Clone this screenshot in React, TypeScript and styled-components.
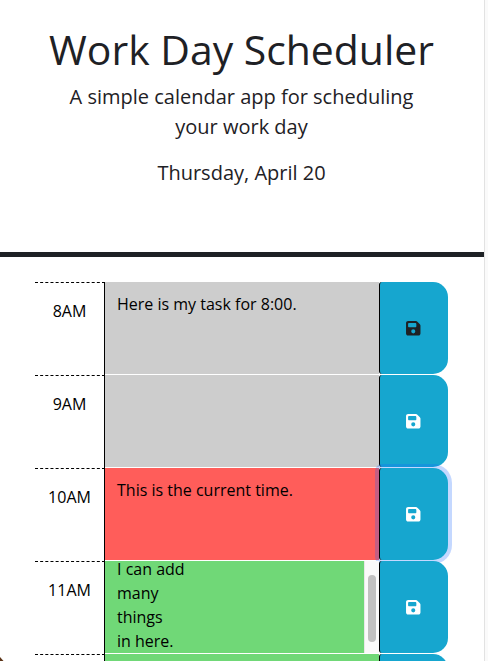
import React from 'react';
import styled, { createGlobalStyle } from 'styled-components';
import { FaFloppyDisk } from 'react-icons/fa6';

const GlobalStyle = createGlobalStyle`
  *, *::before, *::after { box-sizing: border-box; }
  body {
    margin: 0;
    background: #fff;
    color: #1e2125;
    font: 400 16px/1.5 'Open Sans', sans-serif;
    overflow: hidden;
  }
`;

const Page = styled.div`
  display: grid;
  grid-template-columns: minmax(0, 1fr) 4px;
  height: 661px;
  overflow: hidden;
  position: relative;
`;

const Content = styled.div`
  min-width: 0;
  height: 661px;
  overflow: hidden;
`;

const PageGutter = styled.div`
  background: #fafafa;
  border-left: 1px solid #e2e2e2;
`;

const Header = styled.header`
  height: 257px;
  padding: 25px 49px 0 48px;
  text-align: center;
  border-bottom: 5px solid #1e2125;
`;

const Title = styled.h1`
  margin: 0 -20px 9px;
  font-size: 40.9px;
  font-weight: 400;
  line-height: 48px;
  white-space: nowrap;
`;

const Lead = styled.p`
  margin: 0 0 16px;
  font-size: 20px;
  line-height: 30px;
`;

const Schedule = styled.main`
  padding: 25px 36px 0 35px;
`;

const TimeBlock = styled.section`
  display: grid;
  grid-template-columns: 70px 274px 69px;
  height: 93px;
  border-bottom: 1px solid transparent;
`;

const Hour = styled.div`
  height: 93px;
  padding-top: 16px;
  text-align: center;
  color: #000;
  border-right: 1px solid #000;
  border-top: 1px dashed #000;
`;

const fills = { past: '#cdcdcd', present: '#ff5d5a', future: '#70d877' };
type Phase = keyof typeof fills;

const Description = styled.div<{ $phase: Phase }>`
  display: flex;
  height: 92px;
  overflow: hidden;
  color: #000;
  background: ${(p) => fills[p.$phase]};
`;

const TaskText = styled.div<{ $scrolled?: boolean }>`
  flex: 1;
  height: 92px;
  padding: ${(p) => (p.$scrolled ? '0 12px' : '10px 12px')};
  margin-top: ${(p) => (p.$scrolled ? '-4px' : '0')};
  white-space: pre-line;
`;

const ScrollTrack = styled.div`
  width: 15px;
  padding: 14px 3px 0;
  background: #fafafa;
  border-left: 1px solid #e8e8e8;
`;

const ScrollThumb = styled.div`
  width: 8px;
  height: 67px;
  border-radius: 4px;
  background: #c1c1c1;
`;

const SaveButton = styled.button<{ $dark?: boolean; $focused?: boolean }>`
  display: flex;
  align-items: center;
  justify-content: center;
  height: 92px;
  padding: 0 2px 0 0;
  font-size: 16.5px;
  color: ${(p) => (p.$dark ? '#1e2125' : '#fff')};
  background: #16a6cf;
  border: 0;
  border-left: 1px solid #000;
  border-radius: 3px 15px 15px 3px;
  box-shadow: ${(p) => (p.$focused ? '0 0 0 4px rgba(20, 100, 255, 0.25)' : 'none')};
`;

const CornerMark = styled.svg`
  position: absolute;
  left: 0;
  bottom: 0;
`;

interface Slot {
  hour: string;
  phase: Phase;
  text?: string;
  dark?: boolean;
  focused?: boolean;
  scrolled?: boolean;
}

const slots: Slot[] = [
  { hour: '8AM', phase: 'past', text: 'Here is my task for 8:00.', dark: true },
  { hour: '9AM', phase: 'past' },
  { hour: '10AM', phase: 'present', text: 'This is the current time.', focused: true },
  { hour: '11AM', phase: 'future', text: 'I can add\nmany\nthings\nin here.', scrolled: true },
  { hour: '', phase: 'future' },
];

export default function App() {
  return (
    <>
      <GlobalStyle />
      <Page>
        <Content>
          <Header>
            <Title>Work Day Scheduler</Title>
            <Lead>A simple calendar app for scheduling your work day</Lead>
            <Lead>Thursday, April 20</Lead>
          </Header>
          <Schedule>
            {slots.map((slot, i) => (
              <TimeBlock key={i}>
                <Hour>{slot.hour}</Hour>
                <Description $phase={slot.phase}>
                  <TaskText $scrolled={slot.scrolled}>{slot.text}</TaskText>
                  {slot.scrolled && (
                    <ScrollTrack>
                      <ScrollThumb />
                    </ScrollTrack>
                  )}
                </Description>
                <SaveButton aria-label="save" $dark={slot.dark} $focused={slot.focused}>
                  <FaFloppyDisk />
                </SaveButton>
              </TimeBlock>
            ))}
          </Schedule>
        </Content>
        <PageGutter />
        <CornerMark width="4" height="5" viewBox="0 0 4 5">
          <path d="M0 1L3.5 5H0Z" fill="#5c3417" />
        </CornerMark>
      </Page>
    </>
  );
}
